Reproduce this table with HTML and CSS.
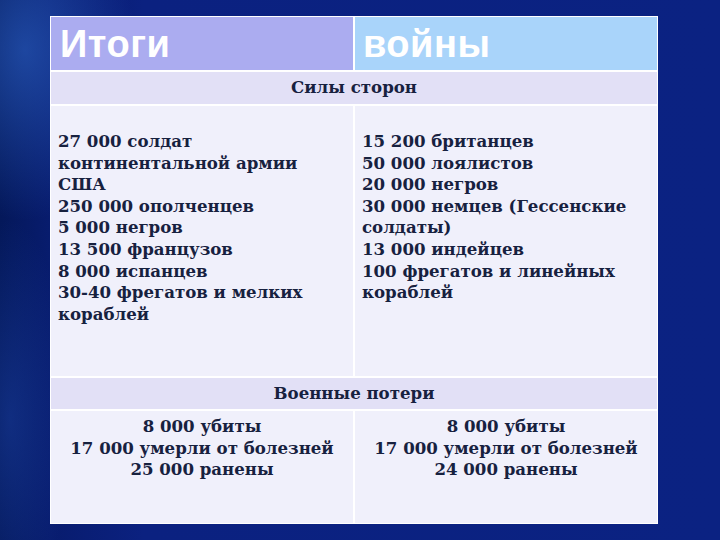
FILE: index.html
```html
<!DOCTYPE html>
<html lang="ru">
<head>
<meta charset="utf-8">
<link rel="stylesheet" href="styles.css">
</head>
<body>
<div class="slide">
  <div class="table">
    <div class="cell head head-left">Итоги</div>
    <div class="cell head head-right">войны</div>
    <div class="cell band span">Силы сторон</div>
    <div class="cell body forces">27 000 солдат<br>континентальной армии<br>США<br>250 000 ополченцев<br>5 000 негров<br>13 500 французов<br>8 000 испанцев<br>30-40 фрегатов и мелких<br>кораблей</div>
    <div class="cell body forces">15 200 британцев<br>50 000 лоялистов<br>20 000 негров<br>30 000 немцев (Гессенские<br>солдаты)<br>13 000 индейцев<br>100 фрегатов и линейных<br>кораблей</div>
    <div class="cell band span">Военные потери</div>
    <div class="cell body losses">8 000 убиты<br>17 000 умерли от болезней<br>25 000 ранены</div>
    <div class="cell body losses">8 000 убиты<br>17 000 умерли от болезней<br>24 000 ранены</div>
  </div>
</div>
</body>
</html>
```

FILE: styles.css
```css
html, body {
  margin: 0;
  padding: 0;
}
body {
  width: 720px;
  height: 540px;
  overflow: hidden;
  background:
    radial-gradient(ellipse 110px 170px at 25px 50px, rgba(45, 100, 200, 0.6), rgba(45, 100, 200, 0) 100%),
    radial-gradient(ellipse 60px 200px at 10px 420px, rgba(30, 70, 170, 0.45), rgba(30, 70, 170, 0) 100%),
    linear-gradient(90deg, #04185a 0%, #081c6e 7%, #0b2180 20%, #0b2282 100%);
}
.slide {
  display: flex;
  padding: 16px 0 0 50px;
}
.table {
  display: grid;
  grid-template-columns: 302px 302px;
  grid-template-rows: 53px 32px 270px 31px 112px;
  gap: 2px;
  padding: 1px;
  background: #ffffff;
}
.cell {
  box-sizing: border-box;
  font-family: "DejaVu Serif", "Liberation Serif", serif;
  font-weight: bold;
  font-size: 16.6px;
  line-height: 21.6px;
  color: #17213f;
}
.head {
  font-family: "Liberation Sans", Arial, sans-serif;
  font-size: 38px;
  line-height: 44px;
  color: #ffffff;
  padding: 5px 0 0 9px;
  letter-spacing: 0.5px;
}
.head-left {
  background: #abacf0;
}
.head-right {
  background: #a9d4fa;
  padding-left: 8px;
}
.band {
  grid-column: 1 / 3;
  background: #e2e0f6;
  text-align: center;
  padding-top: 5px;
}
.body {
  background: #f0f0fb;
}
.forces {
  padding: 25px 0 0 7px;
}
.losses {
  text-align: center;
  padding-top: 5px;
}
```
